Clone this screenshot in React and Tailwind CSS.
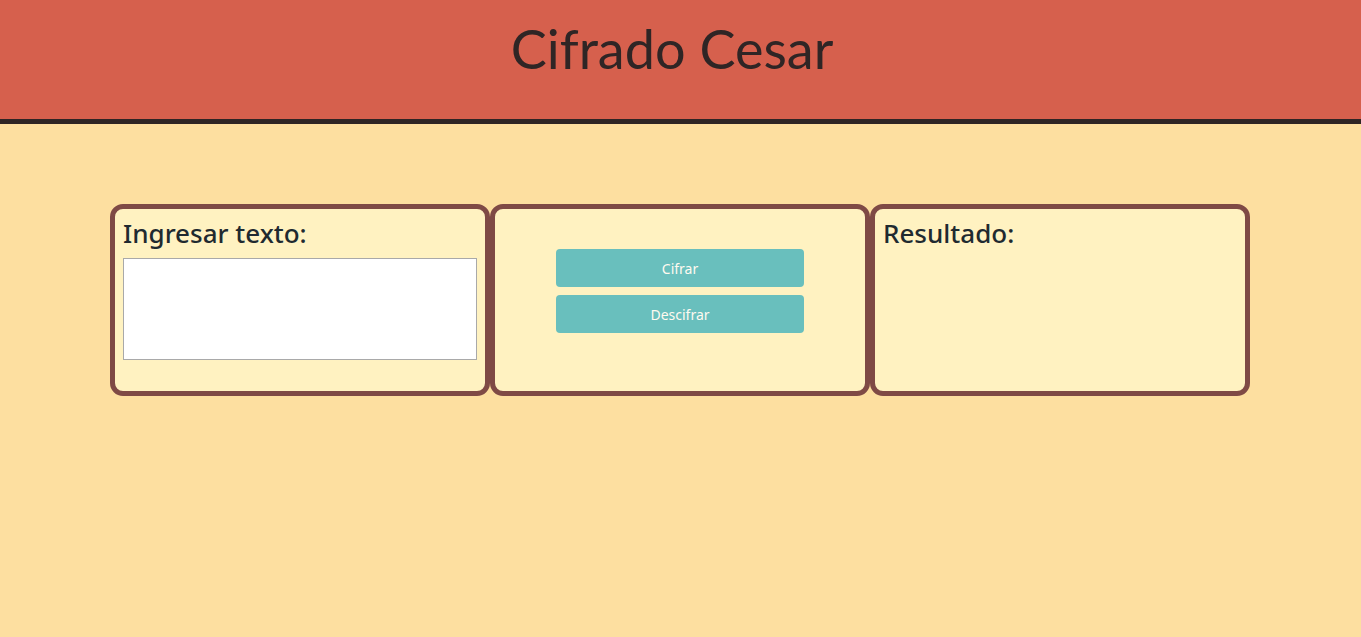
import React, { useState } from 'react';

const shift = (text, n) =>
  text.replace(/[a-z]/gi, (c) => {
    const base = c <= 'Z' ? 65 : 97;
    return String.fromCharCode(((c.charCodeAt(0) - base + n + 26) % 26) + base);
  });

const App = () => {
  const [text, setText] = useState('');
  const [result, setResult] = useState('');

  return (
    <div className="min-h-[637px] bg-[#fddfa0] font-['Noto_Sans',sans-serif]">
      {/* Header */}
      <header className="h-[124px] bg-[#d6604d] border-b-[5px] border-[#2f2525] flex justify-center">
        <h1 className="mt-[15px] mr-[17px] text-[54px] leading-[68px] text-[#2f2525] font-['Lato',sans-serif]">
          Cifrado Cesar
        </h1>
      </header>

      {/* Cards */}
      <div className="flex mx-[110px] mt-[80px]">
        <div className="w-[380px] h-[192px] bg-[#fff2c1] border-[5px] border-[#7f4a45] rounded-[13px] px-[8px] pt-[8px]">
          <h3 className="text-[26px] font-medium leading-[33px] text-[#1f2a30] mb-[8px]">Ingresar texto:</h3>
          <textarea
            value={text}
            onChange={(e) => setText(e.target.value)}
            className="block w-[354px] h-[102px] bg-white border border-[#a9a9a9] resize-none outline-none"
          />
        </div>

        <div className="w-[380px] h-[192px] bg-[#fff2c1] border-[5px] border-[#7f4a45] rounded-[13px] flex flex-col items-center pt-[40px] gap-[8px]">
          <button
            onClick={() => setResult(shift(text, 3))}
            className="w-[248px] h-[38px] bg-[#69bfbd] rounded-[4px] text-[#fffaf0] text-[14px]"
          >
            Cifrar
          </button>
          <button
            onClick={() => setResult(shift(text, -3))}
            className="w-[248px] h-[38px] bg-[#69bfbd] rounded-[4px] text-[#fffaf0] text-[14px]"
          >
            Descifrar
          </button>
        </div>

        <div className="w-[380px] h-[192px] bg-[#fff2c1] border-[5px] border-[#7f4a45] rounded-[13px] px-[8px] pt-[8px]">
          <h3 className="text-[26px] font-medium leading-[33px] text-[#1f2a30] mb-[8px]">Resultado:</h3>
          <p className="text-[16px] text-[#1f2a30] break-words">{result}</p>
        </div>
      </div>
    </div>
  );
};

export default App;
